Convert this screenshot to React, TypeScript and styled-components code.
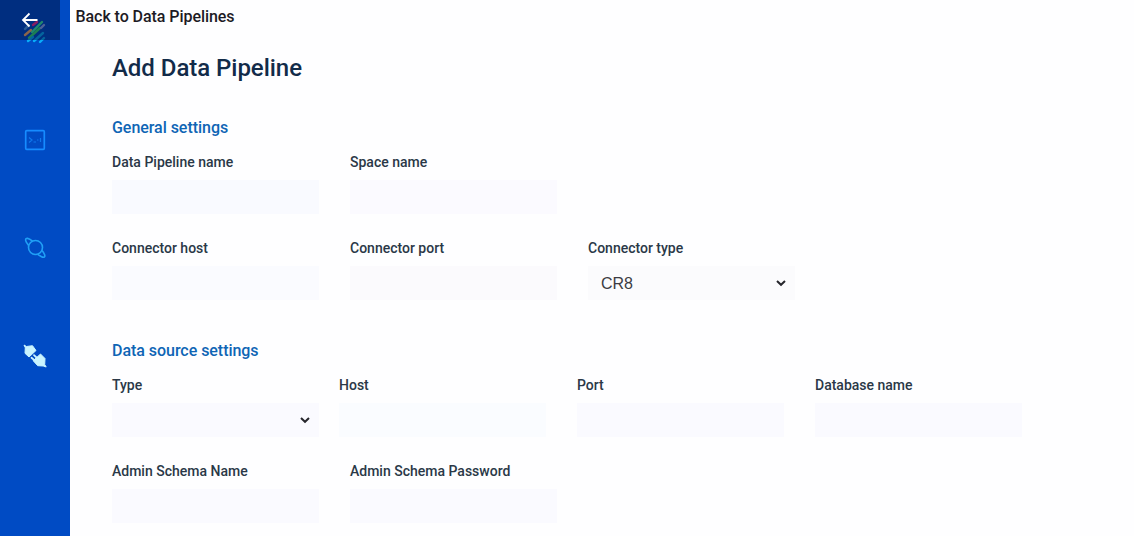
import React from 'react';
import styled, { createGlobalStyle } from 'styled-components';

const GlobalStyle = createGlobalStyle`
  * { box-sizing: border-box; }
  body { margin: 0; background: #fefeff; font-family: Roboto, sans-serif; overflow: hidden; }
`;

const Page = styled.div`
  display: flex;
  height: 536px;
  overflow: hidden;
`;

const Sidebar = styled.nav`
  position: relative;
  width: 70px;
  flex: none;
  background: #004bc4;
  display: flex;
  flex-direction: column;
  align-items: center;
  padding-top: 18px;
`;

const Logo = styled.svg`
  width: 26px;
  height: 26px;
  margin-bottom: 83px;
`;

const NavIcon = styled.svg`
  width: 26px;
  height: 26px;
  margin-bottom: 82px;
  flex: none;
`;

const BackButton = styled.button`
  position: absolute;
  left: 0;
  top: 0;
  width: 60px;
  height: 40px;
  padding: 0;
  border: 0;
  background: rgba(0, 12, 48, 0.46);
  display: flex;
  align-items: center;
  justify-content: center;
`;

const Main = styled.main`
  flex: 1;
  min-width: 0;
`;

const BackLabel = styled.div`
  padding: 1px 0 0 5.5px;
  height: 32px;
  line-height: 32px;
  font-size: 16px;
  font-weight: 500;
  letter-spacing: -0.06px;
  color: #1d1a24;
`;

const Form = styled.form`
  padding-left: 42px;
`;

const Title = styled.h1`
  margin: 20px 0 0;
  height: 32px;
  line-height: 32px;
  font-size: 24px;
  font-weight: 500;
  letter-spacing: -0.04px;
  color: #122b49;
`;

const Section = styled.section<{ $top: number }>`
  margin-top: ${(p) => p.$top}px;
`;

const SectionTitle = styled.h2`
  margin: 0 0 14px;
  height: 20px;
  line-height: 20px;
  font-size: 16px;
  font-weight: 500;
  letter-spacing: -0.04px;
  color: #0e65b5;
`;

const Row = styled.div`
  display: flex;
  height: 86px;
`;

const Field = styled.div<{ $step?: number }>`
  width: ${(p) => p.$step ?? 238}px;
  flex: none;
`;

const Label = styled.label`
  display: block;
  height: 20px;
  line-height: 20px;
  font-size: 14px;
  font-weight: 500;
  color: #2a3847;
  white-space: nowrap;
`;

const Control = styled.div<{ $tint?: string }>`
  width: 207px;
  height: 34px;
  margin-top: 8px;
  padding: 0 8px 0 13px;
  display: flex;
  align-items: center;
  justify-content: space-between;
  background: ${(p) => p.$tint ?? '#fafaff'};
  font-family: 'Liberation Sans', Arial, sans-serif;
  font-size: 16px;
  color: #3c3c43;
`;

const Value = styled.span`
  padding-top: 1px;
`;

const Chevron = () => (
  <svg width="12" height="8" viewBox="0 0 12 8" fill="none" stroke="#26262c" strokeWidth="2">
    <path d="M2 2l4 3.8L10 2" />
  </svg>
);

type FieldProps = { label: string; value?: string; select?: boolean; tint?: string; step?: number };

const FormField = ({ label, value, select, tint, step }: FieldProps) => (
  <Field $step={step}>
    <Label>{label}</Label>
    <Control $tint={tint}>
      <Value>{value}</Value>
      {select && <Chevron />}
    </Control>
  </Field>
);

export default function App() {
  return (
    <Page>
      <GlobalStyle />
      <Sidebar>
        <Logo viewBox="0 0 26 26" fill="none" strokeWidth="2.4" strokeLinecap="round">
          <path d="M11 7l4-3" stroke="#ff2a8c" />
          <path d="M3 11l4-4" stroke="#4fa0e8" />
          <path d="M3 17l6-5" stroke="#ffb060" />
          <path d="M10 14L20 4" stroke="#3df0a0" />
          <path d="M7 20L18 10" stroke="#35e070" />
          <path d="M19 10l3-3" stroke="#90a8f0" />
          <path d="M6 23l5-4M12 23l9-8M18 24l4-4" stroke="#08aefa" />
        </Logo>
        <NavIcon viewBox="0 0 26 26" fill="none" stroke="#168cff" strokeWidth="1.7">
          <rect x="3.7" y="3.7" width="18.6" height="18.6" rx="1" />
          <path d="M7 10.5l3 2.5-3 2.5M11.5 15h2.5M15 13h1.5M18.5 11v4" strokeWidth="1.2" opacity=".7" />
        </NavIcon>
        <NavIcon viewBox="0 0 26 26" fill="none" stroke="#20a0f6" strokeWidth="1.6">
          <circle cx="13.5" cy="12.5" r="7" />
          <path d="M10.5 6.2C6.500 2.800 3.600 2.500 3.600 5c0 1.500 1.500 3.500 3.100 5.500M20 15.500c2.500 3 3.500 5.700 2.300 6.500-1.300.9-4-.7-6.500-2.700" />
        </NavIcon>
        <NavIcon viewBox="0 0 26 26" fill="#c9f4ff" stroke="#c9f4ff" strokeWidth="1" strokeLinejoin="round">
          <path d="M2 2l2.500 1.500 6-.8 3.500 4.800-7 6.500-4-3.700.3-5.500z" />
          <path d="M18.500 11l4.500 4.500-.3 6 1.500 2.500-3-1-5.500-.3-4.500-5z" />
          <path d="M14.500 14.500l-2.500-2.300M12.500 17.200l-3-2.400" strokeWidth="1.800" strokeLinecap="round" />
        </NavIcon>
        <BackButton type="button" aria-label="Back">
          <svg width="18" height="16" viewBox="0 0 18 16" fill="none" stroke="#fff" strokeWidth="1.800">
            <path d="M8.500 1.500L2 8l6.500 6.500M2 8h14.500" />
          </svg>
        </BackButton>
      </Sidebar>
      <Main>
        <BackLabel>Back to Data Pipelines</BackLabel>
        <Form>
          <Title>Add Data Pipeline</Title>
          <Section $top={34}>
            <SectionTitle>General settings</SectionTitle>
            <Row>
              <FormField label="Data Pipeline name" tint="#f9faff" />
              <FormField label="Space name" tint="#fbfaff" />
            </Row>
            <Row>
              <FormField label="Connector host" tint="#fafbff" />
              <FormField label="Connector port" tint="#fbfafd" />
              <FormField label="Connector type" value="CR8" select tint="#fbfbfd" />
            </Row>
          </Section>
          <Section $top={17}>
            <SectionTitle>Data source settings</SectionTitle>
            <Row>
              <FormField label="Type" select step={227} />
              <FormField label="Host" tint="#fafcff" />
              <FormField label="Port" tint="#fafaff" />
              <FormField label="Database name" />
            </Row>
            <Row>
              <FormField label="Admin Schema Name" tint="#fafaff" />
              <FormField label="Admin Schema Password" tint="#fafaff" />
            </Row>
          </Section>
        </Form>
      </Main>
    </Page>
  );
}
